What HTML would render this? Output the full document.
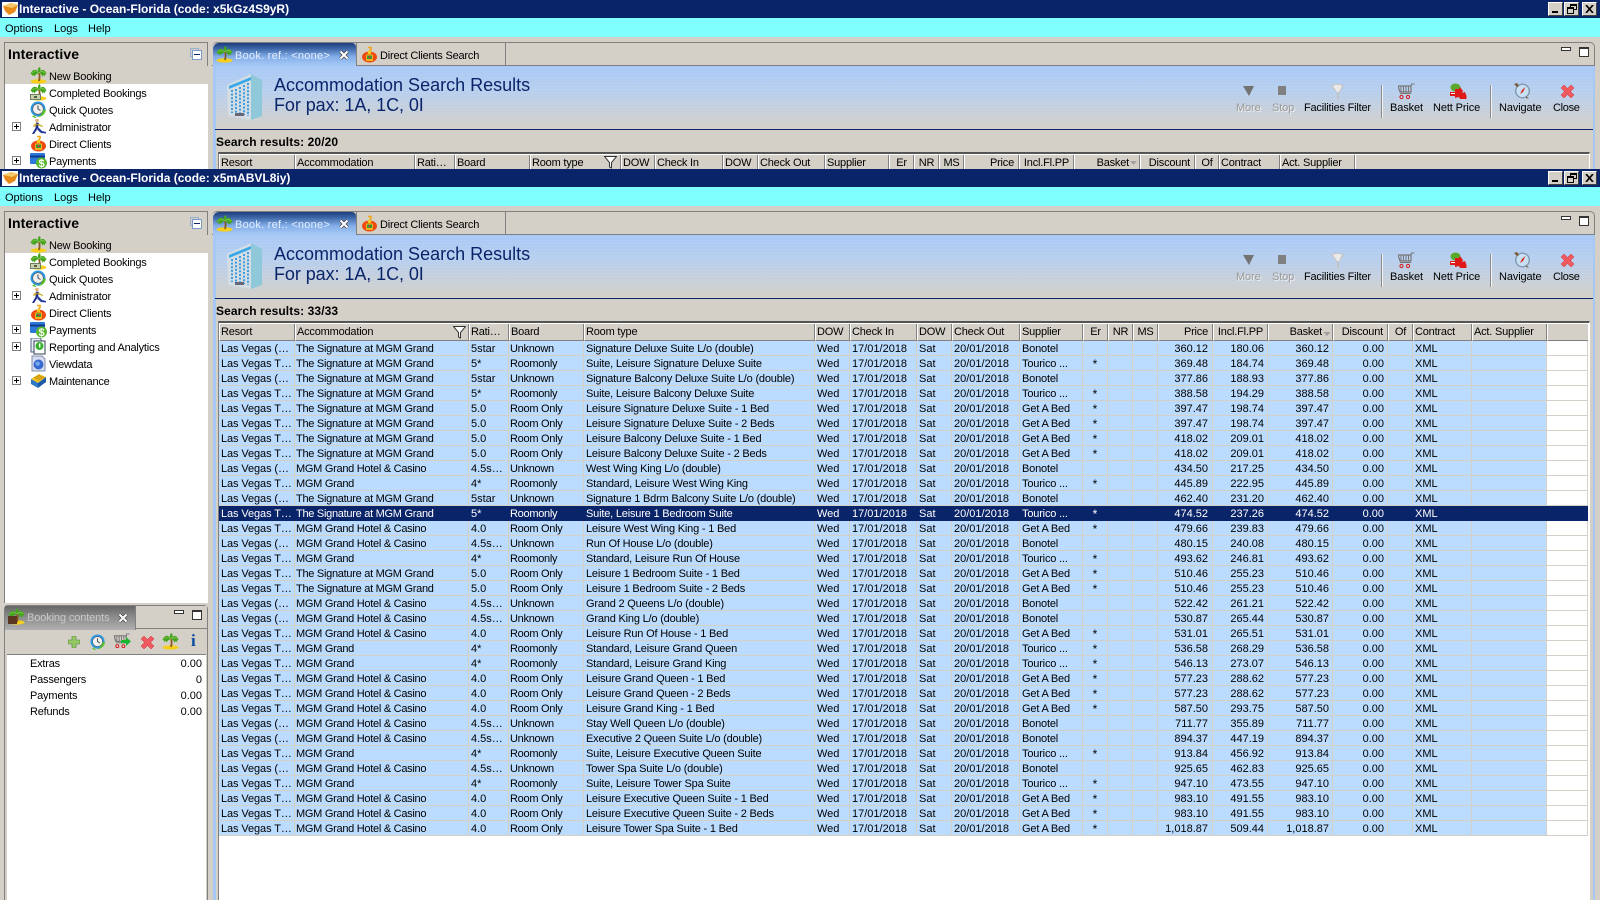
<!DOCTYPE html>
<html><head><meta charset="utf-8"><title>Interactive</title>
<style>
html,body{margin:0;padding:0;width:1600px;height:900px;overflow:hidden;background:#d4d0c8}
body{font:11px/14px "Liberation Sans",Arial,sans-serif;color:#000;position:relative}
.win{position:absolute;left:0;width:1600px;overflow:hidden;background:#d4d0c8}
.win div,.win svg{position:absolute;box-sizing:border-box}
.t{white-space:nowrap}
.title{left:0;top:0;width:1600px;height:18px;background:#0a246a}
.ttxt{left:19px;top:1px;color:#fff;font:bold 12px/16px "Liberation Sans",sans-serif;white-space:nowrap}
.wb{top:2px;width:15px;height:14px;background:#d4d0c8;border:1px solid;border-color:#fff #404040 #404040 #fff}
.menu{left:0;top:18px;width:1600px;height:19px;background:#80ffff}
.m{top:22px;white-space:nowrap;line-height:15px}
.lp{left:4px;top:42px;width:204px;border:1px solid #808080;border-bottom:0;background:#d4d0c8}
.lw{left:5px;top:66px;width:203px;background:#fff}
.lsel{left:5px;top:66px;width:203px;height:18px;background:#d4d0c8}
.lt{left:8px;top:46px;font:bold 14px/17px "Liberation Sans",sans-serif;letter-spacing:.1px;white-space:nowrap}
.ti{left:49px;white-space:nowrap;line-height:14px;letter-spacing:-.22px}
.ic{width:17px;height:17px}
.pb{left:12px;width:9px;height:9px;border:1px solid #808080;background:#fff}
.pb:before{content:"";position:absolute;left:1px;top:3px;width:5px;height:1px;background:#000}
.pb:after{content:"";position:absolute;left:3px;top:1px;width:1px;height:5px;background:#000}
.rp{left:212px;top:42px;width:1383px;background:#d4d0c8;border:1px solid #808080;border-left:0;border-radius:5px 5px 0 0;border-bottom:0}
.stl{left:213px;top:66px;width:3px;background:#a6c8f5}
.str{left:1593px;top:66px;width:2px;background:#a6c8f5}
.hl{left:212px;top:65px;width:1383px;height:1px;background:#808080}
.ban{left:213px;top:66px;width:1381px;height:63px;background:repeating-linear-gradient(0deg,rgba(255,255,255,.05) 0 1px,transparent 1px 3px),linear-gradient(#a8c9f6 0%,#b8cfee 40%,#d4d0c8 100%)}
.bl{left:215px;top:129px;width:1378px;height:1px;background:#0a246a}
.tab1{left:213px;top:43px;width:143px;height:23px;border-radius:6px 4px 0 0;background:linear-gradient(#1c3c7c 0%,#3f68a8 25%,#84aee8 60%,#a8c9f6 100%)}
.tab2{left:356px;top:43px;width:150px;height:23px;background:#d4d0c8;border-left:1px solid #808080;border-right:1px solid #808080;border-bottom:1px solid #808080}
.h1{left:274px;color:#0a246a;font:18px/22px "Liberation Sans",sans-serif;white-space:nowrap}
.sr{left:216px;top:135px;font:bold 12px/15px "Liberation Sans",sans-serif;white-space:nowrap;letter-spacing:.1px}
.tb{top:101px;white-space:nowrap;line-height:14px;text-align:center;letter-spacing:-.12px}
.dis{color:#9a9a9a;text-shadow:1px 1px 0 #eee}
.sep{top:85px;width:2px;height:33px;background:linear-gradient(90deg,#8a8a8a 50%,#f2f2f2 50%)}
.frame{left:218px;top:152px;width:1372px;background:#fff;border-top:2px solid #555;border-left:1px solid #808080;border-right:1px solid #fff}
table{border-collapse:separate;border-spacing:0;table-layout:fixed;position:absolute;left:219px;font:11px/14px "Liberation Sans",sans-serif}
th{font-weight:normal;text-align:left;height:17px;padding:0 0 0 1px;letter-spacing:-.2px;background:#d4d0c8;border-left:1px solid #fff;border-right:1px solid #808080;border-bottom:1px solid #808080;white-space:nowrap;overflow:hidden;box-sizing:border-box;line-height:16px}
td{height:15px;padding:3px 0 0 2px;line-height:11px;vertical-align:top;background:#bbdcff;border-right:1px solid #d4d0c8;border-bottom:1px solid #d4d0c8;white-space:nowrap;overflow:hidden;box-sizing:border-box}
td:last-child{background:#fff}
th.r{text-align:right;padding-right:4px}
td:nth-child(1){letter-spacing:-.1px}
td:nth-child(2){letter-spacing:-.28px;padding-left:1px}
td:nth-child(4){letter-spacing:-.28px;padding-left:1px}
td:nth-child(5){letter-spacing:-.19px}
td:nth-child(10){letter-spacing:-.18px}
td:nth-child(14){text-align:right;padding-right:4px}
td:nth-child(15),td:nth-child(16),td:nth-child(17){text-align:right;padding-right:3px}
td:nth-child(11){text-align:center;padding:3px 0 0;font-size:12px}
td:nth-child(18),th.c{text-align:center;padding-left:0}
tr.s td{background:#0a246a;color:#fff;border-color:#0a246a}
.bp{left:4px;top:436px;width:204px;height:295px;background:#d4d0c8;border:1px solid #808080;border-bottom:0;border-radius:4px 4px 0 0}
.bt1{left:5px;top:437px;width:131px;height:24px;background:linear-gradient(#666 0%,#888 40%,#b0b0b0 100%);border-right:1px solid #808080}
.bw{left:7px;top:485px;width:199px;height:246px;background:#fff;border-top:1px solid #808080}
.bi{left:30px;white-space:nowrap;line-height:14px;letter-spacing:-.2px}
.bv{right:1398px;white-space:nowrap;line-height:14px;text-align:right}
</style></head><body>
<svg width="0" height="0" style="position:absolute"><defs>
<symbol id="palm" viewBox="0 0 17 17"><ellipse cx="8.5" cy="14.4" rx="8" ry="2.2" fill="#f6cf1c"/><path d="M9 14C9.8 11 9.8 8 9 5.5" stroke="#8a5a1c" stroke-width="1.8" fill="none"/><path d="M9 6C7 1.5 2.5 1.5 .5 7C1.5 7 2 7.5 2.5 9C3.5 7.5 4 8 4.5 9.5C5.5 7.5 7 6.5 9 6C7 3 8 1 9.5 0C11 1 11 3.5 9 6C11 1.5 15 2 16.5 7C15.5 7 15 7.5 14.5 9.5C13.5 8 13 8 12.5 10C12 8 11 6.5 9 6Z" fill="#45a51f"/><path d="M9 6C7 4 4 4 2 6M9 6C11 4 13 4 15 6" stroke="#8ad05a" stroke-width=".6" fill="none"/></symbol>
<symbol id="palmc" viewBox="0 0 17 17"><use href="#palm" width="17" height="17"/><rect x="0" y="10" width="11" height="6" fill="#6c8060"/><rect x="1" y="11" width="9" height="4" fill="#c8d0b0"/><rect x="4" y="12" width="3" height="2" fill="#506040"/></symbol>
<symbol id="clock" viewBox="0 0 17 17"><circle cx="8" cy="8" r="7.5" fill="#2a9ae8"/><circle cx="8" cy="8" r="5.3" fill="#f0f0f0" stroke="#555" stroke-width=".6"/><path d="M8 4.5V8L10.5 9.5" stroke="#444" fill="none"/><path d="M16 8.5C15.5 14 10 17.5 4.5 15.5L5.5 13.5L2 15.5L6 17.5L6 16C9 16 12 14 13 9Z" fill="#5cc02c"/></symbol>
<symbol id="run" viewBox="0 0 17 17"><circle cx="7" cy="2.5" r="1.8" fill="#e0b080"/><path d="M6 4.5L9 5L8 10L4 16H2L5.5 10Z" fill="#1c2c8c"/><path d="M8 9L12 13L16 14V15.5L11 15L7.5 12Z" fill="#223a9c"/><path d="M8 5.5L13 8V9L7 7Z" fill="#c8a820"/><path d="M6 5L3 8L4 9L7 7Z" fill="#c8a820"/></symbol>
<symbol id="client" viewBox="0 0 17 17"><ellipse cx="8.5" cy="11" rx="7.5" ry="5.5" fill="#ee4a0f"/><path d="M5 8.5H12V15H5Z" fill="#f6b01c"/><rect x="6" y="9.500" width="5" height="3.500" fill="#2fa048"/><rect x="7.500" y="10.500" width="2" height="1.500" fill="#e02020"/><path d="M7 1.5H10V3.5L8.5 5" stroke="#f0a818" stroke-width="1.6" fill="none"/><circle cx="8.5" cy="6.5" r="1.8" fill="#f6c820"/></symbol>
<symbol id="pay" viewBox="0 0 17 17"><rect x="0" y="1" width="15" height="11" rx="1" fill="#2c78d8"/><rect x="0" y="3.5" width="15" height="2" fill="#103c8c"/><circle cx="11.5" cy="11" r="5.5" fill="#58b82c"/><text x="11.5" y="15" font-size="11" font-weight="bold" text-anchor="middle" fill="#fff" font-family="Liberation Sans">$</text></symbol>
<symbol id="rep" viewBox="0 0 17 17"><rect x="1" y="0" width="10" height="14" fill="#e8eef8" stroke="#506080"/><rect x="4" y="3" width="11" height="13" fill="#fff" stroke="#304050"/><circle cx="9.5" cy="8" r="4" fill="#38b030"/><rect x="9" y="5.5" width="1.4" height="4" fill="#fff"/></symbol>
<symbol id="view" viewBox="0 0 17 17"><path d="M2 1H12L15 4V16H2Z" fill="#d8dcf0" stroke="#8090b0"/><circle cx="8.5" cy="9.5" r="5" fill="#3868d0"/><path d="M5 8C7 6 9 6 10 8C10 11 7 12 6 10Z" fill="#70a8e8"/></symbol>
<symbol id="maint" viewBox="0 0 17 17"><path d="M1 7L9 2L16 5L8 11Z" fill="#f0c020"/><path d="M1 7L8 11V16L1 12Z" fill="#2c78c8"/><path d="M8 11L16 5V10L8 16Z" fill="#1c5aa8"/><path d="M4 6L10 3M6 7L12 4M8 8L14 5" stroke="#c89010"/></symbol>
<symbol id="hotel" viewBox="0 0 35 46"><path d="M24 0L35 6V42L24 46Z" fill="#8fc8d8"/><path d="M0 11L24 0L24 46L1 42Z" fill="#d4dde4"/><path d="M2 12L24 3V6L2 15Z" fill="#38a8e8"/><g stroke="#3c9ce0" stroke-width="2" stroke-dasharray="2 1.6"><path d="M5 16V39"/><path d="M9 15V40"/><path d="M13 13V41"/><path d="M17 11V41"/><path d="M21 9V42"/></g><rect x="8" y="39" width="9" height="3" fill="#667"/></symbol>
<symbol id="cart" viewBox="0 0 17 17"><path d="M0 3H13V9H2Z" fill="none" stroke="#777" stroke-width="1.2"/><path d="M3 3V9M5.5 3V9M8 3V9M10.5 3V9M13 3L13.5 1H16.5" stroke="#777" fill="none"/><path d="M2 10.5H13" stroke="#777"/><circle cx="3.5" cy="14" r="1.6" fill="none" stroke="#d81818"/><circle cx="10" cy="14" r="1.6" fill="none" stroke="#d81818"/></symbol>
<symbol id="nett" viewBox="0 0 18 17"><ellipse cx="6.5" cy="4.5" rx="5" ry="4" fill="#5aa82c"/><path d="M1 9H7V13H1Z" fill="#e01818"/><path d="M6 6H10L11 4L14 8L13 10L16 9L17.500 13V16H11L10 14L6 15Z" fill="#e01818"/><path d="M2 10.5H6" stroke="#fff"/></symbol>
<symbol id="nav" viewBox="0 0 18 18"><circle cx="9.5" cy="9" r="6.8" fill="#c8e0f4" stroke="#8098b0" stroke-width="1.4"/><path d="M12.5 5L10 10L7 12L9 8Z" fill="#d82818"/><path d="M1 2L4 1L6 4L4 5Z" fill="#7a5a30"/><path d="M13 14L16 17L13 16Z" fill="#7a5a30"/></symbol>
<symbol id="x" viewBox="0 0 13 13"><path d="M3 0L6.5 3.5L10 0L13 3L9.5 6.5L13 10L10 13L6.5 9.5L3 13L0 10L3.5 6.5L0 3Z" fill="#ee5a60" stroke="#d03038" stroke-width=".5"/></symbol>
<symbol id="funnel" viewBox="0 0 13 18"><path d="M0 3C3 0 10 0 13 3L8 10V17L6 16V10Z" fill="#c4c4c4"/><path d="M2 3C4 1.5 9 1.5 11 3L8 9H6Z" fill="#eaeaea"/></symbol>
<symbol id="filt" viewBox="0 0 13 13"><path d="M.5 .5H12.5L7.5 6.5V12L5.5 11V6.5Z" fill="#fff" stroke="#333"/></symbol>
<symbol id="tclose" viewBox="0 0 10 10"><path d="M1.5 1.5L8.5 8.5M8.5 1.5L1.5 8.5" stroke="#444" stroke-width="3.4"/><path d="M1.5 1.5L8.5 8.5M8.5 1.5L1.5 8.5" stroke="#fff" stroke-width="2"/></symbol>
</defs></svg>

<div class="win" style="top:0;height:169px">
<div class="title"></div>
<div style="left:2px;top:2px;width:16px;height:15px;background:#fff"></div>
<svg style="left:3px;top:3px" width="15" height="13" viewBox="0 0 15 13"><path d="M0 3L8 0L15 2L12 9L6 12L2 8Z" fill="#e88a18"/><path d="M8 0L15 2L9 5L0 3Z" fill="#f4c868"/></svg>
<div class="ttxt">Interactive - Ocean-Florida (code: x5kGz4S9yR)</div>
<div class="wb" style="left:1548px"><div style="left:3px;top:8px;width:6px;height:2px;background:#000"></div></div>
<div class="wb" style="left:1564px"><div style="left:5px;top:1px;width:7px;height:6px;border:1px solid #000;border-top-width:2px"></div><div style="left:2px;top:4px;width:7px;height:7px;border:1px solid #000;border-top-width:2px;background:#d4d0c8"></div></div>
<div class="wb" style="left:1582px"><svg style="left:2px;top:2px" width="9" height="8" viewBox="0 0 9 8"><path d="M1 0L8 8M8 0L1 8" stroke="#000" stroke-width="1.7"/></svg></div>
<div class="menu"></div>
<div class="m" style="left:5px">Options</div><div class="m" style="left:54px">Logs</div><div class="m" style="left:88px">Help</div>
<div class="lp" style="height:127px"></div><div class="lw" style="height:103px"></div><div class="lsel"></div>
<div class="lt">Interactive</div>
<div style="left:190px;top:48px;width:9px;height:9px;border:1px solid #9ab0d0"></div>
<div style="left:192px;top:50px;width:10px;height:10px;border:1px solid #7a98c8;background:#fff"></div>
<div style="left:194px;top:54px;width:6px;height:1px;background:#0a246a"></div>
<svg class="ic" style="left:30px;top:67px"><use href="#palm"/></svg><div class="ti" style="top:70px">New Booking</div>
<svg class="ic" style="left:30px;top:84px"><use href="#palmc"/></svg><div class="ti" style="top:87px">Completed Bookings</div>
<svg class="ic" style="left:30px;top:101px"><use href="#clock"/></svg><div class="ti" style="top:104px">Quick Quotes</div>
<div class="pb" style="top:122px"></div><svg class="ic" style="left:30px;top:118px"><use href="#run"/></svg><div class="ti" style="top:121px">Administrator</div>
<svg class="ic" style="left:30px;top:135px"><use href="#client"/></svg><div class="ti" style="top:138px">Direct Clients</div>
<div class="pb" style="top:156px"></div><svg class="ic" style="left:30px;top:152px"><use href="#pay"/></svg><div class="ti" style="top:155px">Payments</div>

<div class="rp" style="height:127px"></div><div class="hl"></div>
<div class="ban"></div><div class="stl" style="height:103px"></div><div class="str" style="height:103px"></div><div class="bl"></div>
<div class="tab1"></div><div class="tab2"></div>
<svg class="ic" style="left:216px;top:46px"><use href="#palm"/></svg>
<div class="t" style="left:235px;top:49px;color:#e4eeff;letter-spacing:.25px;line-height:14px">Book. ref.: &lt;none&gt;</div>
<svg style="left:339px;top:50px" width="10" height="10"><use href="#tclose"/></svg>
<svg class="ic" style="left:361px;top:46px"><use href="#client"/></svg>
<div class="t" style="left:380px;top:49px;letter-spacing:-.2px;line-height:14px">Direct Clients Search</div>
<div style="left:1561px;top:47px;width:10px;height:4px;border:1px solid #333;background:#fff"></div>
<div style="left:1579px;top:47px;width:10px;height:10px;border:1px solid #333;border-top-width:2px;background:#fff"></div>
<svg style="left:227px;top:74px" width="35" height="46"><use href="#hotel"/></svg>
<div class="h1" style="top:74px">Accommodation Search Results</div>
<div class="h1" style="top:94px;letter-spacing:-.07px">For pax: 1A, 1C, 0I</div>
<svg style="left:1243px;top:85px" width="12" height="12" viewBox="0 0 12 12"><path d="M0 1H11L6 11Z" fill="#737373"/></svg>
<div style="left:1278px;top:86px;width:8px;height:9px;background:#808080"></div>
<svg style="left:1331px;top:83px" width="13" height="18"><use href="#funnel"/></svg>
<div class="tb dis" style="left:1236px">More</div><div class="tb dis" style="left:1272px">Stop</div><div class="tb" style="left:1304px;letter-spacing:-.2px">Facilities Filter</div>
<div class="sep" style="left:1381px"></div>
<svg class="ic" style="left:1398px;top:83px"><use href="#cart"/></svg><div class="tb" style="left:1390px">Basket</div>
<svg style="left:1449px;top:83px" width="18" height="17"><use href="#nett"/></svg><div class="tb" style="left:1433px">Nett Price</div>
<div class="sep" style="left:1490px"></div>
<svg style="left:1513px;top:82px" width="18" height="18"><use href="#nav"/></svg><div class="tb" style="left:1499px">Navigate</div>
<svg style="left:1561px;top:85px" width="13" height="13"><use href="#x"/></svg><div class="tb" style="left:1553px;letter-spacing:-.3px">Close</div>
<div class="sr">Search results: 20/20</div>
<div class="frame" style="height:17px"></div>
<table style="top:155px;width:1370px"><colgroup><col style="width:76px"><col style="width:120px"><col style="width:40px"><col style="width:75px"><col style="width:91px"><col style="width:34px"><col style="width:68px"><col style="width:35px"><col style="width:67px"><col style="width:64px"><col style="width:25px"><col style="width:25px"><col style="width:25px"><col style="width:55px"><col style="width:55px"><col style="width:66px"><col style="width:55px"><col style="width:24px"><col style="width:61px"><col style="width:75px"><col style="width:234px"></colgroup><tr><th>Resort</th><th>Accommodation</th><th>Rati…</th><th>Board</th><th>Room type</th><th>DOW</th><th>Check In</th><th>DOW</th><th>Check Out</th><th>Supplier</th><th class="c">Er</th><th class="c">NR</th><th class="c">MS</th><th class="r">Price</th><th class="r">Incl.Fl.PP</th><th class="r" style="padding-right:10px">Basket</th><th class="r">Discount</th><th class="c">Of</th><th>Contract</th><th>Act. Supplier</th><th style="border-right:0"></th></tr></table>
<svg style="left:604px;top:156px" width="13" height="13"><use href="#filt"/></svg>
<svg style="left:1130px;top:161px" width="7" height="4" viewBox="0 0 9 5"><path d="M0 0H9L4.5 5Z" fill="#a0a0a0"/></svg>
</div>

<div class="win" style="top:169px;height:731px">
<div class="title"></div>
<div style="left:2px;top:2px;width:16px;height:15px;background:#fff"></div>
<svg style="left:3px;top:3px" width="15" height="13" viewBox="0 0 15 13"><path d="M0 3L8 0L15 2L12 9L6 12L2 8Z" fill="#e88a18"/><path d="M8 0L15 2L9 5L0 3Z" fill="#f4c868"/></svg>
<div class="ttxt">Interactive - Ocean-Florida (code: x5mABVL8iy)</div>
<div class="wb" style="left:1548px"><div style="left:3px;top:8px;width:6px;height:2px;background:#000"></div></div>
<div class="wb" style="left:1564px"><div style="left:5px;top:1px;width:7px;height:6px;border:1px solid #000;border-top-width:2px"></div><div style="left:2px;top:4px;width:7px;height:7px;border:1px solid #000;border-top-width:2px;background:#d4d0c8"></div></div>
<div class="wb" style="left:1582px"><svg style="left:2px;top:2px" width="9" height="8" viewBox="0 0 9 8"><path d="M1 0L8 8M8 0L1 8" stroke="#000" stroke-width="1.7"/></svg></div>
<div class="menu"></div>
<div class="m" style="left:5px">Options</div><div class="m" style="left:54px">Logs</div><div class="m" style="left:88px">Help</div>
<div class="lp" style="height:392px"></div><div class="lw" style="height:368px"></div><div class="lsel"></div>
<div class="lt">Interactive</div>
<div style="left:190px;top:48px;width:9px;height:9px;border:1px solid #9ab0d0"></div>
<div style="left:192px;top:50px;width:10px;height:10px;border:1px solid #7a98c8;background:#fff"></div>
<div style="left:194px;top:54px;width:6px;height:1px;background:#0a246a"></div>
<svg class="ic" style="left:30px;top:67px"><use href="#palm"/></svg><div class="ti" style="top:70px">New Booking</div>
<svg class="ic" style="left:30px;top:84px"><use href="#palmc"/></svg><div class="ti" style="top:87px">Completed Bookings</div>
<svg class="ic" style="left:30px;top:101px"><use href="#clock"/></svg><div class="ti" style="top:104px">Quick Quotes</div>
<div class="pb" style="top:122px"></div><svg class="ic" style="left:30px;top:118px"><use href="#run"/></svg><div class="ti" style="top:121px">Administrator</div>
<svg class="ic" style="left:30px;top:135px"><use href="#client"/></svg><div class="ti" style="top:138px">Direct Clients</div>
<div class="pb" style="top:156px"></div><svg class="ic" style="left:30px;top:152px"><use href="#pay"/></svg><div class="ti" style="top:155px">Payments</div>
<div class="pb" style="top:173px"></div><svg class="ic" style="left:30px;top:169px"><use href="#rep"/></svg><div class="ti" style="top:172px">Reporting and Analytics</div>
<svg class="ic" style="left:30px;top:186px"><use href="#view"/></svg><div class="ti" style="top:189px">Viewdata</div>
<div class="pb" style="top:207px"></div><svg class="ic" style="left:30px;top:203px"><use href="#maint"/></svg><div class="ti" style="top:206px">Maintenance</div>

<div class="bp"></div>
<div class="bt1"></div>
<div style="left:136px;top:437px;width:71px;height:23px;background:#d4d0c8;border-bottom:1px solid #808080"></div>
<svg class="ic" style="left:8px;top:439px"><use href="#palm"/></svg>
<div style="left:8px;top:447px;width:9px;height:8px;background:#5a3820"></div>
<div class="t" style="left:27px;top:442px;color:#c8c8c8;letter-spacing:-.12px;line-height:14px">Booking contents</div>
<svg style="left:118px;top:444px" width="10" height="10"><use href="#tclose"/></svg>
<div style="left:174px;top:441px;width:10px;height:4px;border:1px solid #333;background:#fff"></div>
<div style="left:192px;top:441px;width:10px;height:10px;border:1px solid #333;border-top-width:2px;background:#fff"></div>
<svg style="left:68px;top:467px" width="12" height="12" viewBox="0 0 12 12"><path d="M4 0H8V4H12V8H8V12H4V8H0V4H4Z" fill="#94c864" stroke="#508038" stroke-width=".6"/></svg>
<svg style="left:90px;top:465px" width="16" height="16"><use href="#clock"/></svg>
<svg style="left:114px;top:464px" width="16" height="16"><use href="#cart"/></svg>
<svg style="left:121px;top:468px" width="10" height="9" viewBox="0 0 10 9"><path d="M0 3H5V0L10 4.5L5 9V6H0Z" fill="#18b830"/></svg>
<svg style="left:141px;top:467px" width="13" height="13"><use href="#x"/></svg>
<svg class="ic" style="left:162px;top:464px"><use href="#palm"/></svg>
<div class="t" style="left:191px;top:462px;color:#0a4aa0;font:bold 17px/20px 'Liberation Serif',serif">i</div>
<div class="bw"></div>
<div class="bi" style="top:488px">Extras</div><div class="bv" style="top:488px">0.00</div>
<div class="bi" style="top:504px">Passengers</div><div class="bv" style="top:504px">0</div>
<div class="bi" style="top:520px">Payments</div><div class="bv" style="top:520px">0.00</div>
<div class="bi" style="top:536px">Refunds</div><div class="bv" style="top:536px">0.00</div>

<div class="rp" style="height:689px"></div><div class="hl"></div>
<div class="ban"></div><div class="stl" style="height:665px"></div><div class="str" style="height:665px"></div><div class="bl"></div>
<div class="tab1"></div><div class="tab2"></div>
<svg class="ic" style="left:216px;top:46px"><use href="#palm"/></svg>
<div class="t" style="left:235px;top:49px;color:#e4eeff;letter-spacing:.25px;line-height:14px">Book. ref.: &lt;none&gt;</div>
<svg style="left:339px;top:50px" width="10" height="10"><use href="#tclose"/></svg>
<svg class="ic" style="left:361px;top:46px"><use href="#client"/></svg>
<div class="t" style="left:380px;top:49px;letter-spacing:-.2px;line-height:14px">Direct Clients Search</div>
<div style="left:1561px;top:47px;width:10px;height:4px;border:1px solid #333;background:#fff"></div>
<div style="left:1579px;top:47px;width:10px;height:10px;border:1px solid #333;border-top-width:2px;background:#fff"></div>
<svg style="left:227px;top:74px" width="35" height="46"><use href="#hotel"/></svg>
<div class="h1" style="top:74px">Accommodation Search Results</div>
<div class="h1" style="top:94px;letter-spacing:-.07px">For pax: 1A, 1C, 0I</div>
<svg style="left:1243px;top:85px" width="12" height="12" viewBox="0 0 12 12"><path d="M0 1H11L6 11Z" fill="#737373"/></svg>
<div style="left:1278px;top:86px;width:8px;height:9px;background:#808080"></div>
<svg style="left:1331px;top:83px" width="13" height="18"><use href="#funnel"/></svg>
<div class="tb dis" style="left:1236px">More</div><div class="tb dis" style="left:1272px">Stop</div><div class="tb" style="left:1304px;letter-spacing:-.2px">Facilities Filter</div>
<div class="sep" style="left:1381px"></div>
<svg class="ic" style="left:1398px;top:83px"><use href="#cart"/></svg><div class="tb" style="left:1390px">Basket</div>
<svg style="left:1449px;top:83px" width="18" height="17"><use href="#nett"/></svg><div class="tb" style="left:1433px">Nett Price</div>
<div class="sep" style="left:1490px"></div>
<svg style="left:1513px;top:82px" width="18" height="18"><use href="#nav"/></svg><div class="tb" style="left:1499px">Navigate</div>
<svg style="left:1561px;top:85px" width="13" height="13"><use href="#x"/></svg><div class="tb" style="left:1553px;letter-spacing:-.3px">Close</div>
<div class="sr">Search results: 33/33</div>
<div class="frame" style="height:579px"></div>
<table style="top:155px;width:1369px"><colgroup><col style="width:76px"><col style="width:174px"><col style="width:40px"><col style="width:75px"><col style="width:231px"><col style="width:35px"><col style="width:67px"><col style="width:35px"><col style="width:68px"><col style="width:63px"><col style="width:25px"><col style="width:25px"><col style="width:25px"><col style="width:55px"><col style="width:55px"><col style="width:65px"><col style="width:55px"><col style="width:25px"><col style="width:59px"><col style="width:75px"><col style="width:41px"></colgroup>
<tr><th>Resort</th><th>Accommodation</th><th>Rati…</th><th>Board</th><th>Room type</th><th>DOW</th><th>Check In</th><th>DOW</th><th>Check Out</th><th>Supplier</th><th class="c">Er</th><th class="c">NR</th><th class="c">MS</th><th class="r">Price</th><th class="r">Incl.Fl.PP</th><th class="r" style="padding-right:10px">Basket</th><th class="r">Discount</th><th class="c">Of</th><th>Contract</th><th>Act. Supplier</th><th style="border-right:0"></th></tr>
<tr><td>Las Vegas (…<td>The Signature at MGM Grand<td>5star<td>Unknown<td>Signature Deluxe Suite L/o (double)<td>Wed<td>17/01/2018<td>Sat<td>20/01/2018<td>Bonotel<td><td><td><td>360.12<td>180.06<td>360.12<td>0.00<td><td>XML<td><td></tr>
<tr><td>Las Vegas T…<td>The Signature at MGM Grand<td>5*<td>Roomonly<td>Suite, Leisure Signature Deluxe Suite<td>Wed<td>17/01/2018<td>Sat<td>20/01/2018<td>Tourico ...<td>*<td><td><td>369.48<td>184.74<td>369.48<td>0.00<td><td>XML<td><td></tr>
<tr><td>Las Vegas (…<td>The Signature at MGM Grand<td>5star<td>Unknown<td>Signature Balcony Deluxe Suite L/o (double)<td>Wed<td>17/01/2018<td>Sat<td>20/01/2018<td>Bonotel<td><td><td><td>377.86<td>188.93<td>377.86<td>0.00<td><td>XML<td><td></tr>
<tr><td>Las Vegas T…<td>The Signature at MGM Grand<td>5*<td>Roomonly<td>Suite, Leisure Balcony Deluxe Suite<td>Wed<td>17/01/2018<td>Sat<td>20/01/2018<td>Tourico ...<td>*<td><td><td>388.58<td>194.29<td>388.58<td>0.00<td><td>XML<td><td></tr>
<tr><td>Las Vegas T…<td>The Signature at MGM Grand<td>5.0<td>Room Only<td>Leisure Signature Deluxe Suite - 1 Bed<td>Wed<td>17/01/2018<td>Sat<td>20/01/2018<td>Get A Bed<td>*<td><td><td>397.47<td>198.74<td>397.47<td>0.00<td><td>XML<td><td></tr>
<tr><td>Las Vegas T…<td>The Signature at MGM Grand<td>5.0<td>Room Only<td>Leisure Signature Deluxe Suite - 2 Beds<td>Wed<td>17/01/2018<td>Sat<td>20/01/2018<td>Get A Bed<td>*<td><td><td>397.47<td>198.74<td>397.47<td>0.00<td><td>XML<td><td></tr>
<tr><td>Las Vegas T…<td>The Signature at MGM Grand<td>5.0<td>Room Only<td>Leisure Balcony Deluxe Suite - 1 Bed<td>Wed<td>17/01/2018<td>Sat<td>20/01/2018<td>Get A Bed<td>*<td><td><td>418.02<td>209.01<td>418.02<td>0.00<td><td>XML<td><td></tr>
<tr><td>Las Vegas T…<td>The Signature at MGM Grand<td>5.0<td>Room Only<td>Leisure Balcony Deluxe Suite - 2 Beds<td>Wed<td>17/01/2018<td>Sat<td>20/01/2018<td>Get A Bed<td>*<td><td><td>418.02<td>209.01<td>418.02<td>0.00<td><td>XML<td><td></tr>
<tr><td>Las Vegas (…<td>MGM Grand Hotel &amp; Casino<td>4.5s…<td>Unknown<td>West Wing King L/o (double)<td>Wed<td>17/01/2018<td>Sat<td>20/01/2018<td>Bonotel<td><td><td><td>434.50<td>217.25<td>434.50<td>0.00<td><td>XML<td><td></tr>
<tr><td>Las Vegas T…<td>MGM Grand<td>4*<td>Roomonly<td>Standard, Leisure West Wing King<td>Wed<td>17/01/2018<td>Sat<td>20/01/2018<td>Tourico ...<td>*<td><td><td>445.89<td>222.95<td>445.89<td>0.00<td><td>XML<td><td></tr>
<tr><td>Las Vegas (…<td>The Signature at MGM Grand<td>5star<td>Unknown<td>Signature 1 Bdrm Balcony Suite L/o (double)<td>Wed<td>17/01/2018<td>Sat<td>20/01/2018<td>Bonotel<td><td><td><td>462.40<td>231.20<td>462.40<td>0.00<td><td>XML<td><td></tr>
<tr class="s"><td>Las Vegas T…<td>The Signature at MGM Grand<td>5*<td>Roomonly<td>Suite, Leisure 1 Bedroom Suite<td>Wed<td>17/01/2018<td>Sat<td>20/01/2018<td>Tourico ...<td>*<td><td><td>474.52<td>237.26<td>474.52<td>0.00<td><td>XML<td><td style="background:#0a246a"></tr>
<tr><td>Las Vegas T…<td>MGM Grand Hotel &amp; Casino<td>4.0<td>Room Only<td>Leisure West Wing King - 1 Bed<td>Wed<td>17/01/2018<td>Sat<td>20/01/2018<td>Get A Bed<td>*<td><td><td>479.66<td>239.83<td>479.66<td>0.00<td><td>XML<td><td></tr>
<tr><td>Las Vegas (…<td>MGM Grand Hotel &amp; Casino<td>4.5s…<td>Unknown<td>Run Of House L/o (double)<td>Wed<td>17/01/2018<td>Sat<td>20/01/2018<td>Bonotel<td><td><td><td>480.15<td>240.08<td>480.15<td>0.00<td><td>XML<td><td></tr>
<tr><td>Las Vegas T…<td>MGM Grand<td>4*<td>Roomonly<td>Standard, Leisure Run Of House<td>Wed<td>17/01/2018<td>Sat<td>20/01/2018<td>Tourico ...<td>*<td><td><td>493.62<td>246.81<td>493.62<td>0.00<td><td>XML<td><td></tr>
<tr><td>Las Vegas T…<td>The Signature at MGM Grand<td>5.0<td>Room Only<td>Leisure 1 Bedroom Suite - 1 Bed<td>Wed<td>17/01/2018<td>Sat<td>20/01/2018<td>Get A Bed<td>*<td><td><td>510.46<td>255.23<td>510.46<td>0.00<td><td>XML<td><td></tr>
<tr><td>Las Vegas T…<td>The Signature at MGM Grand<td>5.0<td>Room Only<td>Leisure 1 Bedroom Suite - 2 Beds<td>Wed<td>17/01/2018<td>Sat<td>20/01/2018<td>Get A Bed<td>*<td><td><td>510.46<td>255.23<td>510.46<td>0.00<td><td>XML<td><td></tr>
<tr><td>Las Vegas (…<td>MGM Grand Hotel &amp; Casino<td>4.5s…<td>Unknown<td>Grand 2 Queens L/o (double)<td>Wed<td>17/01/2018<td>Sat<td>20/01/2018<td>Bonotel<td><td><td><td>522.42<td>261.21<td>522.42<td>0.00<td><td>XML<td><td></tr>
<tr><td>Las Vegas (…<td>MGM Grand Hotel &amp; Casino<td>4.5s…<td>Unknown<td>Grand King L/o (double)<td>Wed<td>17/01/2018<td>Sat<td>20/01/2018<td>Bonotel<td><td><td><td>530.87<td>265.44<td>530.87<td>0.00<td><td>XML<td><td></tr>
<tr><td>Las Vegas T…<td>MGM Grand Hotel &amp; Casino<td>4.0<td>Room Only<td>Leisure Run Of House - 1 Bed<td>Wed<td>17/01/2018<td>Sat<td>20/01/2018<td>Get A Bed<td>*<td><td><td>531.01<td>265.51<td>531.01<td>0.00<td><td>XML<td><td></tr>
<tr><td>Las Vegas T…<td>MGM Grand<td>4*<td>Roomonly<td>Standard, Leisure Grand Queen<td>Wed<td>17/01/2018<td>Sat<td>20/01/2018<td>Tourico ...<td>*<td><td><td>536.58<td>268.29<td>536.58<td>0.00<td><td>XML<td><td></tr>
<tr><td>Las Vegas T…<td>MGM Grand<td>4*<td>Roomonly<td>Standard, Leisure Grand King<td>Wed<td>17/01/2018<td>Sat<td>20/01/2018<td>Tourico ...<td>*<td><td><td>546.13<td>273.07<td>546.13<td>0.00<td><td>XML<td><td></tr>
<tr><td>Las Vegas T…<td>MGM Grand Hotel &amp; Casino<td>4.0<td>Room Only<td>Leisure Grand Queen - 1 Bed<td>Wed<td>17/01/2018<td>Sat<td>20/01/2018<td>Get A Bed<td>*<td><td><td>577.23<td>288.62<td>577.23<td>0.00<td><td>XML<td><td></tr>
<tr><td>Las Vegas T…<td>MGM Grand Hotel &amp; Casino<td>4.0<td>Room Only<td>Leisure Grand Queen - 2 Beds<td>Wed<td>17/01/2018<td>Sat<td>20/01/2018<td>Get A Bed<td>*<td><td><td>577.23<td>288.62<td>577.23<td>0.00<td><td>XML<td><td></tr>
<tr><td>Las Vegas T…<td>MGM Grand Hotel &amp; Casino<td>4.0<td>Room Only<td>Leisure Grand King - 1 Bed<td>Wed<td>17/01/2018<td>Sat<td>20/01/2018<td>Get A Bed<td>*<td><td><td>587.50<td>293.75<td>587.50<td>0.00<td><td>XML<td><td></tr>
<tr><td>Las Vegas (…<td>MGM Grand Hotel &amp; Casino<td>4.5s…<td>Unknown<td>Stay Well Queen L/o (double)<td>Wed<td>17/01/2018<td>Sat<td>20/01/2018<td>Bonotel<td><td><td><td>711.77<td>355.89<td>711.77<td>0.00<td><td>XML<td><td></tr>
<tr><td>Las Vegas (…<td>MGM Grand Hotel &amp; Casino<td>4.5s…<td>Unknown<td>Executive 2 Queen Suite L/o (double)<td>Wed<td>17/01/2018<td>Sat<td>20/01/2018<td>Bonotel<td><td><td><td>894.37<td>447.19<td>894.37<td>0.00<td><td>XML<td><td></tr>
<tr><td>Las Vegas T…<td>MGM Grand<td>4*<td>Roomonly<td>Suite, Leisure Executive Queen Suite<td>Wed<td>17/01/2018<td>Sat<td>20/01/2018<td>Tourico ...<td>*<td><td><td>913.84<td>456.92<td>913.84<td>0.00<td><td>XML<td><td></tr>
<tr><td>Las Vegas (…<td>MGM Grand Hotel &amp; Casino<td>4.5s…<td>Unknown<td>Tower Spa Suite L/o (double)<td>Wed<td>17/01/2018<td>Sat<td>20/01/2018<td>Bonotel<td><td><td><td>925.65<td>462.83<td>925.65<td>0.00<td><td>XML<td><td></tr>
<tr><td>Las Vegas T…<td>MGM Grand<td>4*<td>Roomonly<td>Suite, Leisure Tower Spa Suite<td>Wed<td>17/01/2018<td>Sat<td>20/01/2018<td>Tourico ...<td>*<td><td><td>947.10<td>473.55<td>947.10<td>0.00<td><td>XML<td><td></tr>
<tr><td>Las Vegas T…<td>MGM Grand Hotel &amp; Casino<td>4.0<td>Room Only<td>Leisure Executive Queen Suite - 1 Bed<td>Wed<td>17/01/2018<td>Sat<td>20/01/2018<td>Get A Bed<td>*<td><td><td>983.10<td>491.55<td>983.10<td>0.00<td><td>XML<td><td></tr>
<tr><td>Las Vegas T…<td>MGM Grand Hotel &amp; Casino<td>4.0<td>Room Only<td>Leisure Executive Queen Suite - 2 Beds<td>Wed<td>17/01/2018<td>Sat<td>20/01/2018<td>Get A Bed<td>*<td><td><td>983.10<td>491.55<td>983.10<td>0.00<td><td>XML<td><td></tr>
<tr><td>Las Vegas T…<td>MGM Grand Hotel &amp; Casino<td>4.0<td>Room Only<td>Leisure Tower Spa Suite - 1 Bed<td>Wed<td>17/01/2018<td>Sat<td>20/01/2018<td>Get A Bed<td>*<td><td><td>1,018.87<td>509.44<td>1,018.87<td>0.00<td><td>XML<td><td></tr>
</table>
<svg style="left:453px;top:157px" width="13" height="13"><use href="#filt"/></svg>
<svg style="left:1323px;top:163px" width="8" height="4" viewBox="0 0 9 5"><path d="M0 0H9L4.5 5Z" fill="#a0a0a0"/></svg>
</div>
</body></html>
